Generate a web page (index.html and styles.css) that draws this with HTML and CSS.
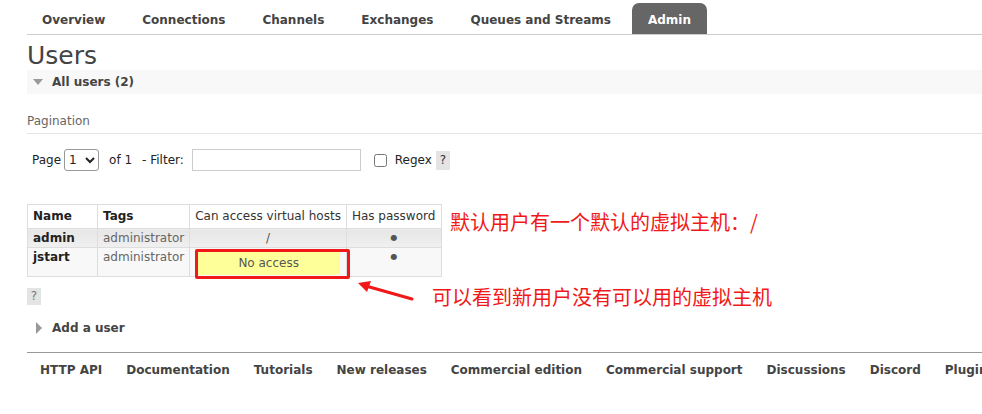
FILE: index.html
```html
<!DOCTYPE html>
<html lang="en">
<head>
  <meta charset="UTF-8">
  <title>RabbitMQ Management - Users</title>
  <link rel="stylesheet" href="styles.css">
</head>
<body>
  <div class="page">
    <ul class="tabs">
      <li>Overview</li>
      <li>Connections</li>
      <li>Channels</li>
      <li>Exchanges</li>
      <li>Queues and Streams</li>
      <li class="active">Admin</li>
    </ul>

    <h1>Users</h1>

    <div class="section">
      <h2 class="section-head"><span class="tri tri-down"></span>All users (2)</h2>

      <div class="pagination">
        <h3>Pagination</h3>
        <div class="filter-row">
          <span>Page</span>
          <select class="page-select"><option>1</option></select>
          <span class="of">of 1</span>
          <span>- Filter:</span>
          <input class="filter-input" type="text">
          <label class="regex"><input type="checkbox"> Regex</label>
          <span class="help">?</span>
        </div>
      </div>

      <table class="users">
        <thead>
          <tr>
            <th class="col-name">Name</th>
            <th class="col-tags">Tags</th>
            <th class="col-vhosts plain">Can access virtual hosts</th>
            <th class="col-pass plain">Has password</th>
          </tr>
        </thead>
        <tbody>
          <tr class="row-alt1">
            <td class="name">admin</td>
            <td class="tags">administrator</td>
            <td class="center">/</td>
            <td class="center"><span class="dot">&#9679;</span></td>
          </tr>
          <tr class="row-alt0">
            <td class="name">jstart</td>
            <td class="tags">administrator</td>
            <td class="vhost-cell"><div class="no-access">No access</div></td>
            <td class="center"><span class="dot">&#9679;</span></td>
          </tr>
        </tbody>
      </table>

      <span class="help help-small">?</span>
    </div>

    <div class="section-closed">
      <h2 class="section-head plainbg"><span class="tri tri-right"></span>Add a user</h2>
    </div>

    <ul class="footer">
      <li>HTTP API</li>
      <li>Documentation</li>
      <li>Tutorials</li>
      <li>New releases</li>
      <li>Commercial edition</li>
      <li>Commercial support</li>
      <li>Discussions</li>
      <li>Discord</li>
      <li>Plugins</li>
      <li>GitHub</li>
    </ul>

    <!-- annotations drawn over the screenshot -->
    <div class="note note-top">默认用户有一个默认的虚拟主机：/</div>
    <div class="note note-bottom">可以看到新用户没有可以用的虚拟主机</div>
    <div class="mark-box"></div>
    <svg class="mark-arrow" width="60" height="24" viewBox="0 0 60 24">
      <line x1="56" y1="19" x2="10" y2="6" stroke="#f01818" stroke-width="3" stroke-linecap="round"/>
      <polygon points="2,3 15,1 11,12" fill="#f01818"/>
    </svg>
  </div>
</body>
</html>
```

FILE: styles.css
```css
* {
  box-sizing: border-box;
}

body {
  margin: 0;
  font-family: "DejaVu Sans", Verdana, sans-serif;
  font-size: 12px;
  color: #444;
  background: #fff;
  overflow: hidden;
}

.page {
  position: relative;
  padding-left: 27px;
  width: 1100px;
}

.tabs {
  display: flex;
  list-style: none;
  margin: 0;
  padding: 3px 0 0 0;
  border-bottom: 1px solid #ccc;
}

.tabs li {
  height: 31px;
  padding: 3px 16px 0 16px;
  line-height: 28px;
  margin-right: 5px;
  font-weight: bold;
  color: #444;
}

.tabs li:first-child {
  margin-left: -1px;
}

.tabs li.active {
  background: #666;
  color: #fff;
  border-radius: 7px 7px 0 0;
}

h1 {
  margin: 7px 0 0 0;
  font-size: 25px;
  font-weight: normal;
  line-height: 28px;
  color: #444;
}

.section-head {
  display: flex;
  align-items: center;
  height: 24px;
  margin: 0;
  font-size: 12px;
  font-weight: bold;
  background: #f8f8f8;
  color: #444;
}

.section-head.plainbg {
  background: #fff;
}

.tri {
  display: inline-block;
  width: 0;
  height: 0;
  margin: 0 9px 0 6px;
}

.tri-down {
  border-left: 5px solid transparent;
  border-right: 5px solid transparent;
  border-top: 6px solid #999;
}

.tri-right {
  margin-left: 9px;
  margin-right: 10px;
  border-top: 6px solid transparent;
  border-bottom: 6px solid transparent;
  border-left: 6px solid #999;
}

.pagination h3 {
  margin: 20px 0 0 0;
  padding-bottom: 4px;
  font-size: 12px;
  font-weight: normal;
  color: #666;
  border-bottom: 1px solid #e4e4e4;
  line-height: 15px;
}

.filter-row {
  display: flex;
  align-items: center;
  margin: 15px 0 0 5px;
  height: 22px;
  color: #222;
}

.page-select {
  width: 35px;
  height: 22px;
  margin: 0 0 0 3px;
  font-family: "DejaVu Sans", Verdana, sans-serif;
  font-size: 12px;
  border: 1px solid #999;
  border-radius: 3px;
  background: #fff;
  color: #222;
}

.of {
  margin: 0 10px 0 10px;
}

.filter-input {
  width: 169px;
  height: 22px;
  margin: 0 0 0 8px;
  border: 1px solid #ccc;
}

.regex {
  display: flex;
  align-items: center;
  margin-left: 13px;
}

.regex input {
  width: 13px;
  height: 13px;
  margin: 0 8px 0 0;
}

.help {
  display: inline-block;
  width: 14px;
  height: 19px;
  line-height: 19px;
  margin-left: 4px;
  text-align: center;
  background: #e4e4e4;
  color: #333;
}

.help-small {
  display: block;
  margin: 11px 0 0 0;
  height: 17px;
  line-height: 17px;
  color: #777;
}

.users {
  margin-top: 33px;
  border-collapse: collapse;
  border: 1px solid #ddd;
}

.users th,
.users td {
  border: 1px solid #ddd;
  padding: 0 5px;
  text-align: left;
  vertical-align: top;
  white-space: nowrap;
}

.users th {
  height: 23px;
  line-height: 23px;
  color: #222;
}

.users th.plain {
  font-weight: normal;
  color: #333;
}

.col-name { width: 70px; }
.col-tags { width: 92px; }
.col-vhosts { width: 156px; }
.col-pass { width: 95px; }

.users td {
  height: 18px;
  line-height: 18px;
}

.row-alt1 td {
  background: linear-gradient(#e6e6e6, #f0f0f0);
}

.row-alt0 td {
  background: #f8f8f8;
  height: 28px;
}

.users td.name {
  font-weight: bold;
  color: #222;
}

.users td.tags {
  color: #666;
}

.users td.center {
  text-align: center;
  color: #555;
}

.dot {
  display: inline-block;
  vertical-align: top;
  height: 18px;
  line-height: 18px;
  font-size: 8px;
  color: #555;
}

.users td.vhost-cell {
  padding: 3px 4px 1px 7px;
}

.no-access {
  width: 143px;
  height: 24px;
  line-height: 24px;
  text-align: center;
  background: #ffff99;
  border-radius: 0 4px 4px 0;
  color: #555;
}

.section-closed {
  margin-top: 11px;
}

.footer {
  display: flex;
  list-style: none;
  margin: 12px 0 0 0;
  padding: 0 0 0 1px;
  border-top: 1px solid #999;
  white-space: nowrap;
}

.footer li {
  padding: 10px 12px 0 12px;
  font-weight: bold;
  color: #444;
}

.note {
  position: absolute;
  font-family: "Noto Sans CJK SC", sans-serif;
  font-size: 20px;
  line-height: 24px;
  color: #f01818;
  white-space: nowrap;
}

.note-top {
  left: 450px;
  top: 210px;
}

.note-bottom {
  left: 432px;
  top: 285px;
}

.mark-box {
  position: absolute;
  left: 195px;
  top: 249px;
  width: 155px;
  height: 30px;
  border: 3px solid #f01818;
  border-radius: 2px;
}

.mark-arrow {
  position: absolute;
  left: 356px;
  top: 280px;
}
```
